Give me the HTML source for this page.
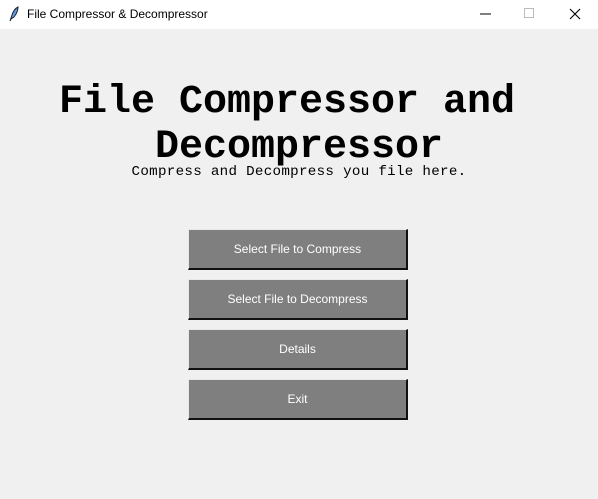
<!DOCTYPE html>
<html><head><style>
body{margin:0;width:598px;height:499px;background:#f0f0f0;position:relative;overflow:hidden;font-family:"Liberation Sans",sans-serif}
.tb{position:absolute;left:0;top:0;width:598px;height:29px;background:#fff}
.tb .t{position:absolute;left:27px;top:7px;font-size:12px;color:#000}
h1{position:absolute;left:0;width:598px;top:80px;margin:0;text-align:center;font-family:"Liberation Mono",monospace;font-weight:bold;font-size:40px;line-height:45px;color:#000}
.sub{position:absolute;left:0;width:598px;top:164px;text-align:center;font-family:"Liberation Mono",monospace;font-size:14.2px;letter-spacing:0.3px;color:#000}
.b{position:absolute;left:188px;width:217px;height:38px;background:#7f7f7f;border-top:1px solid #e8e8e8;border-left:1px solid #e8e8e8;border-right:2px solid #111;border-bottom:2px solid #111;color:#fff;font-size:12px;text-align:center;line-height:39px}
</style></head><body>
<div class="tb">
<svg style="position:absolute;left:8px;top:6px" width="12" height="16" viewBox="0 0 12 16"><path d="M2 15 L4 9 Q6 3 10 1 Q10 6 6 11 L3 13 Z" fill="#6a9be0" stroke="#123" stroke-width="1"/></svg>
<div class="t">File Compressor &amp; Decompressor</div>
<svg style="position:absolute;left:478px;top:6px" width="110" height="16"><line x1="2" y1="8" x2="13" y2="8" stroke="#000"/><rect x="46.5" y="2.5" width="9" height="9" fill="none" stroke="#bbb"/><path d="M92 3 L102 13 M102 3 L92 13" stroke="#000" stroke-width="1.1"/></svg>
</div>
<h1><span style="margin-right:24px">File Compressor and</span><br>Decompressor</h1>
<div class="sub">Compress and Decompress you file here.</div>
<div class="b" style="top:229px">Select File to Compress</div>
<div class="b" style="top:279px">Select File to Decompress</div>
<div class="b" style="top:329px">Details</div>
<div class="b" style="top:379px">Exit</div>
</body></html>
